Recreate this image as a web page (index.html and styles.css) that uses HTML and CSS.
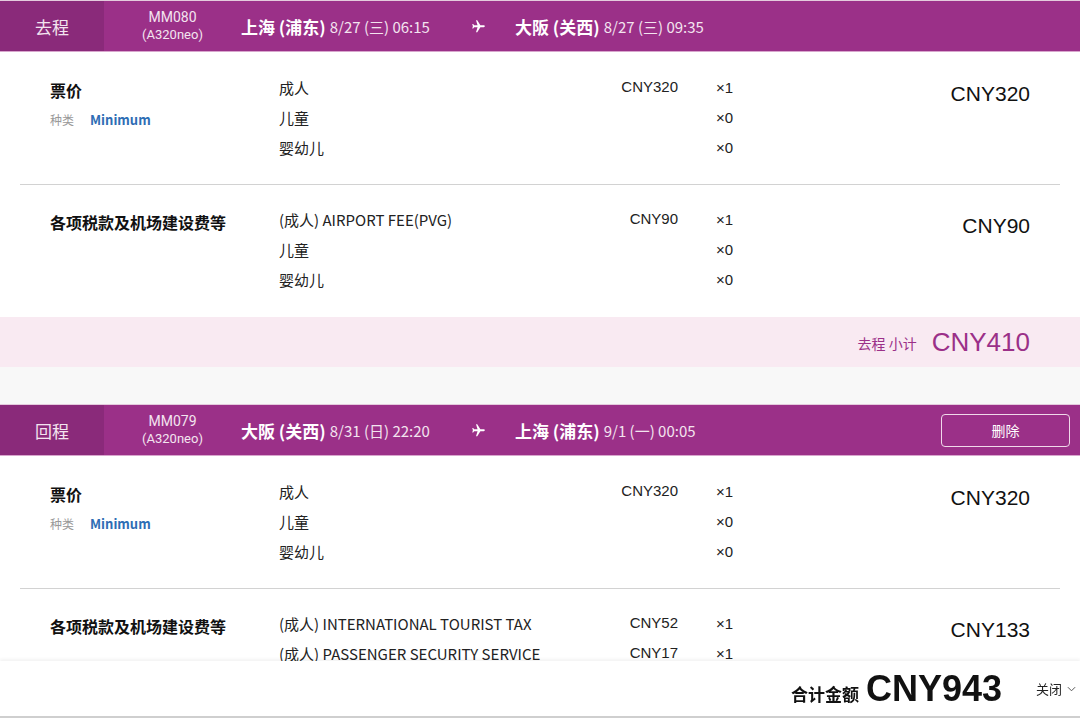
FILE: index.html
```html
<!DOCTYPE html>
<html lang="zh-CN">
<head>
<meta charset="utf-8">
<title>运费明细</title>
<link rel="stylesheet" href="styles.css">
</head>
<body>
<main class="page">
  <section class="leg">
    <header class="leg-head">
      <div class="leg-type">去程</div>
      <div class="flight-no"><span>MM080</span><span class="aircraft">(A320neo)</span></div>
      <div class="station"><b>上海 (浦东)</b><span class="time">8/27 (三) 06:15</span></div>
      <div class="plane"><svg viewBox="0 0 24 24" width="15" height="15"><path fill="#fff" d="M16 21h2l5-8h5.5c.83 0 1.5-.67 1.5-1.5S29.33 10 28.5 10H23l-5-8h-2l2.5 8H13l-1.5-2H10l1 3.5-1 3.5h1.5L13 13h5.5z" transform="translate(-8 0)"/></svg></div>
      <div class="station"><b>大阪 (关西)</b><span class="time">8/27 (三) 09:35</span></div>
    </header>
    <div class="fare-rows">
      <div class="fare-row">
        <div class="label">
          <div class="title">票价</div>
          <div class="kind"><span class="kind-key">种类</span><span class="kind-val">Minimum</span></div>
        </div>
        <div class="lines">
          <div class="line"><span class="name">成人</span><span class="price">CNY320</span><span class="qty">×1</span></div>
          <div class="line"><span class="name">儿童</span><span class="price"></span><span class="qty">×0</span></div>
          <div class="line"><span class="name">婴幼儿</span><span class="price"></span><span class="qty">×0</span></div>
        </div>
        <div class="total">CNY320</div>
      </div>
      <div class="fare-row">
        <div class="label">
          <div class="title">各项税款及机场建设费等</div>
        </div>
        <div class="lines">
          <div class="line"><span class="name">(成人) AIRPORT FEE(PVG)</span><span class="price">CNY90</span><span class="qty">×1</span></div>
          <div class="line"><span class="name">儿童</span><span class="price"></span><span class="qty">×0</span></div>
          <div class="line"><span class="name">婴幼儿</span><span class="price"></span><span class="qty">×0</span></div>
        </div>
        <div class="total">CNY90</div>
      </div>
    </div>
    <div class="subtotal"><span class="sub-label">去程 小计</span><span class="sub-value">CNY410</span></div>
  </section>

  <div class="spacer"></div>

  <section class="leg">
    <header class="leg-head">
      <div class="leg-type">回程</div>
      <div class="flight-no"><span>MM079</span><span class="aircraft">(A320neo)</span></div>
      <div class="station"><b>大阪 (关西)</b><span class="time">8/31 (日) 22:20</span></div>
      <div class="plane"><svg viewBox="0 0 24 24" width="15" height="15"><path fill="#fff" d="M16 21h2l5-8h5.5c.83 0 1.5-.67 1.5-1.5S29.33 10 28.5 10H23l-5-8h-2l2.5 8H13l-1.5-2H10l1 3.5-1 3.5h1.5L13 13h5.5z" transform="translate(-8 0)"/></svg></div>
      <div class="station"><b>上海 (浦东)</b><span class="time">9/1 (一) 00:05</span></div>
      <div class="actions"><button class="btn-delete" type="button">删除</button></div>
    </header>
    <div class="fare-rows">
      <div class="fare-row">
        <div class="label">
          <div class="title">票价</div>
          <div class="kind"><span class="kind-key">种类</span><span class="kind-val">Minimum</span></div>
        </div>
        <div class="lines">
          <div class="line"><span class="name">成人</span><span class="price">CNY320</span><span class="qty">×1</span></div>
          <div class="line"><span class="name">儿童</span><span class="price"></span><span class="qty">×0</span></div>
          <div class="line"><span class="name">婴幼儿</span><span class="price"></span><span class="qty">×0</span></div>
        </div>
        <div class="total">CNY320</div>
      </div>
      <div class="fare-row fare-row-last">
        <div class="label">
          <div class="title">各项税款及机场建设费等</div>
        </div>
        <div class="lines">
          <div class="line"><span class="name">(成人) INTERNATIONAL TOURIST TAX</span><span class="price">CNY52</span><span class="qty">×1</span></div>
          <div class="line"><span class="name">(成人) PASSENGER SECURITY SERVICE</span><span class="price">CNY17</span><span class="qty">×1</span></div>
        </div>
        <div class="total">CNY133</div>
      </div>
    </div>
  </section>
</main>

<footer class="total-bar">
  <span class="grand-label">合计金额</span>
  <span class="grand-value">CNY943</span>
  <button class="close-btn" type="button">关闭<svg viewBox="0 0 10 6" width="9" height="6"><path d="M1 1l4 4 4-4" fill="none" stroke="#555" stroke-width="1.1"/></svg></button>
</footer>
</body>
</html>
```

FILE: styles.css
```css
* { box-sizing: border-box; }

body {
  margin: 0;
  background: #fff;
  color: #222;
  font-family: "Noto Sans CJK SC", "Noto Sans", sans-serif;
}

.leg-head {
  display: flex;
  align-items: stretch;
  height: 52px;
  background: #9b3088;
  border-top: 1px solid #e4cadd;
  border-bottom: 1px solid #d8a6cd;
  color: #fff;
}

.leg-type {
  width: 104px;
  background: #8a2a7a;
  display: flex;
  align-items: center;
  justify-content: center;
  font-size: 17px;
  color: #f3e4ef;
}

.flight-no {
  width: 137px;
  display: flex;
  flex-direction: column;
  align-items: center;
  justify-content: center;
  font-family: Roboto, "Noto Sans", sans-serif;
  font-size: 14px;
  line-height: 18px;
  color: #f3e4ef;
}

.aircraft { font-size: 13px; }

.station {
  width: 230px;
  display: flex;
  align-items: center;
  font-size: 15px;
  white-space: nowrap;
}

.station b {
  font-size: 17px;
  font-weight: 700;
  margin-right: 4px;
}

.time { color: #f3e4ef; }

.plane {
  width: 44px;
  display: flex;
  align-items: center;
}

.actions {
  margin-left: auto;
  padding-right: 10px;
  display: flex;
  align-items: center;
}

.btn-delete {
  width: 129px;
  height: 33px;
  border: 1px solid #f0d9ea;
  border-radius: 4px;
  background: transparent;
  color: #fff;
  font-family: inherit;
  font-size: 14px;
}

.fare-rows { margin: 0 20px; }

.fare-row {
  display: grid;
  grid-template-columns: 229px 477px 1fr;
  padding: 21px 30px;
}

.fare-row + .fare-row {
  border-top: 1px solid #d2d2d2;
  padding-top: 20px;
  padding-bottom: 22px;
}

.fare-row-last { padding-bottom: 40px; }

.title {
  margin-top: 5px;
  font-size: 16px;
  line-height: 24px;
  font-weight: 700;
  color: #111;
}

.kind {
  margin-top: 8px;
  font-size: 12px;
  line-height: 20px;
  display: flex;
  align-items: center;
}

.kind-key { color: #999; margin-right: 16px; }

.kind-val {
  color: #2e6db4;
  font-weight: 700;
  font-size: 13px;
}

.line {
  display: grid;
  grid-template-columns: 1fr auto 78px;
  height: 30px;
  align-items: center;
  font-size: 15px;
  color: #222;
}

.name {
  white-space: nowrap;
  margin-top: -2px;
}

.price {
  font-family: "Liberation Sans", Arial, sans-serif;
  font-size: 15px;
  text-align: right;
  margin-top: -3px;
}

.qty {
  padding-left: 38px;
  font-family: "Liberation Sans", Arial, sans-serif;
  font-size: 15px;
  margin-top: -2px;
}

.total {
  padding-top: 9px;
  line-height: 24px;
  text-align: right;
  font-family: "Liberation Sans", Arial, sans-serif;
  font-size: 21px;
  color: #111;
}

.subtotal {
  height: 50px;
  background: #f9eaf2;
  display: flex;
  justify-content: flex-end;
  align-items: center;
  padding-right: 50px;
  color: #9b3088;
}

.sub-label { font-size: 14px; margin-top: 2px; }

.sub-value {
  margin-left: 15px;
  font-family: "Liberation Sans", Arial, sans-serif;
  font-size: 26px;
}

.spacer {
  height: 37px;
  background: #f8f8f8;
}

.total-bar {
  position: fixed;
  left: 0;
  right: 0;
  bottom: 0;
  height: 57px;
  background: #fff;
  border-bottom: 2px solid #cfcfcf;
  box-shadow: 0 -2px 3px rgba(0, 0, 0, 0.05);
  display: flex;
  justify-content: flex-end;
  align-items: center;
  padding-right: 4px;
}

.grand-label {
  font-size: 17px;
  font-weight: 700;
  color: #111;
  margin-top: 10px;
}

.grand-value {
  margin-left: 7px;
  font-family: "Liberation Sans", Arial, sans-serif;
  font-weight: 700;
  font-size: 36px;
  color: #111;
}

.close-btn {
  margin-left: 34px;
  border: 0;
  background: none;
  padding: 0;
  font-family: inherit;
  font-size: 13px;
  color: #222;
  display: flex;
  align-items: center;
  gap: 5px;
}
```
